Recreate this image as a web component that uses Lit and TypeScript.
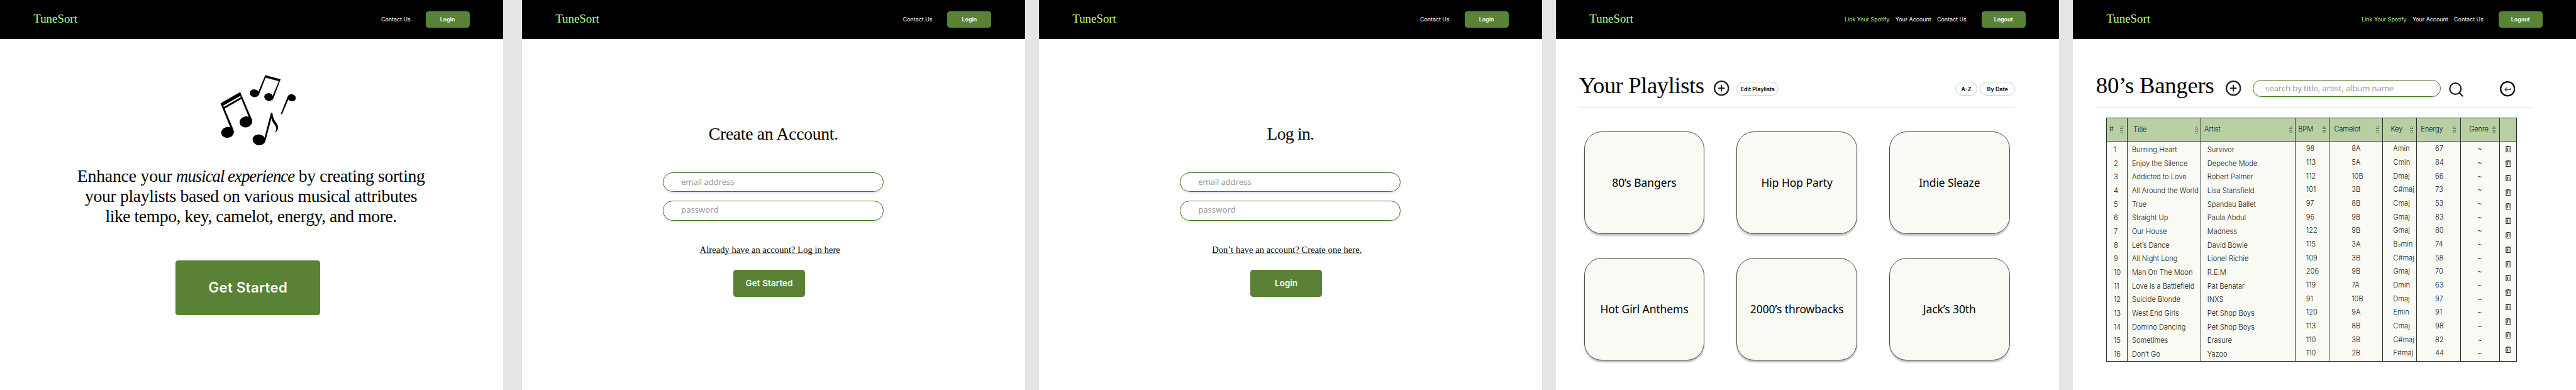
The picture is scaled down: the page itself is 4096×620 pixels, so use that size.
import { LitElement, html, css, nothing } from "lit";
import { customElement, property } from "lit/decorators.js";
import { classMap } from "lit/directives/class-map.js";

const plusIcon = html`<svg viewBox="0 0 44 44" width="44" height="44" fill="none" stroke="#1f1f1f" stroke-width="4">
  <circle cx="22" cy="22" r="20" />
  <path d="M14 22H30M22 14V30" stroke-linecap="round" stroke-width="3.6" />
</svg>`;

const searchIcon = html`<svg viewBox="0 0 48 48" width="48" height="48" fill="none" stroke="#1f1f1f" stroke-width="4">
  <circle cx="22" cy="21.7" r="16" />
  <path d="M33.4 33.4L42.3 42.3" stroke-linecap="round" />
</svg>`;

const returnIcon = html`<svg viewBox="0 0 44 44" width="44" height="44" fill="none">
  <circle cx="22" cy="22" r="20" stroke="#000" stroke-width="4" />
  <path d="M30.3 19.3V24H14.4M19.5 18.8L14.3 24L19.5 29.2" stroke="#1c1c1c" stroke-width="1.9" />
</svg>`;

const sortIcon = html`<svg viewBox="0 0 9.4 22" width="9.4" height="22">
  <path d="M4.7 1L8.7 7.8H.7Z M4.7 21L8.7 14.2H.7Z" fill="#fff" stroke="#1a2214" stroke-width="1.2" />
</svg>`;

const trashIcon = html`<svg viewBox="0 0 16 18" width="16" height="18" fill="none" stroke="#1c1b1f" stroke-width="2">
  <path d="M0 2.1H16M5 1H11M1.7 2V17H14.3V2M5.9 5V14M10.1 5V14" />
</svg>`;

const notesArt = html`<svg class="notes" viewBox="60 30 720 690" width="240" height="230">
  <path d="M96 318L265 221L354 430Q368 450 368 475L340 440L275 280L131 364L197 520Q210 545 210 570L180 526Z" />
  <path d="M119 338L265 254L270 265L124 349Z" fill="#fff" />
  <ellipse cx="156" cy="567" rx="55" ry="46.5" transform="rotate(-12 156 567)" />
  <ellipse cx="314" cy="477" rx="55" ry="46.5" transform="rotate(-12 314 477)" />
  <ellipse cx="386" cy="231" rx="39" ry="33" transform="rotate(12 386 231)" />
  <ellipse cx="510" cy="264" rx="39" ry="33" transform="rotate(12 510 264)" />
  <path d="M480 76L612 111L552 270Q547 288 535 294L540 262L596 127L483 98L429 235Q424 250 412 260L418 224Z" />
  <ellipse cx="707" cy="270" rx="36" ry="30" transform="rotate(14 707 270)" />
  <path d="M671 262L684 272L624 412L613 409Z" />
  <ellipse cx="426" cy="631" rx="55" ry="46" transform="rotate(8 426 631)" />
  <path d="M529 399L542 401C545 470 590 485 590 525C590 545 578 564 558 566C574 555 577 540 573 525C566 500 540 485 533 446L483 636Q478 655 462 668L474 612Z" />
</svg>`;

@customElement("site-header")
class SiteHeader extends LitElement {
  @property({ type: Boolean }) member = false;

  static styles = css`
    :host {
      display: flex;
      align-items: center;
      justify-content: space-between;
      box-sizing: border-box;
      height: 112px;
      padding: 0 96px;
      background: #000;
      color: #fff;
      font: 16px/24px Inter, sans-serif;
      white-space: nowrap;
    }
    .logo {
      font: 34px/40px "Liberation Serif", serif;
      color: #b6ff80;
      padding-bottom: 3px;
    }
    nav {
      display: flex;
      align-items: center;
      gap: 17px;
    }
    .spotify {
      color: #b6ff80;
    }
    .session {
      display: grid;
      place-items: center;
      width: 126px;
      height: 48px;
      margin-left: 26px;
      border-radius: 8px;
      background: #598237;
      font-weight: 600;
    }
  `;

  render() {
    return html`
      <span class="logo">TuneSort</span>
      <nav>
        ${this.member
          ? html`<span class="spotify">Link Your Spotify</span><span>Your Account</span>`
          : nothing}
        <span>Contact Us</span>
        <span class="session">${this.member ? "Logout" : "Login"}</span>
      </nav>
    `;
  }
}

@customElement("landing-screen")
class LandingScreen extends LitElement {
  static styles = css`
    :host {
      display: block;
      background: #fff;
    }
    .notes {
      display: block;
      margin: 88px 0 0 620px;
    }
    .pitch {
      margin: 46px 0 0;
      padding-right: 3px;
      text-align: center;
      font: 50px/57.6px "Liberation Serif", serif;
      letter-spacing: -0.7px;
      white-space: nowrap;
    }
    .lead {
      letter-spacing: -0.4px;
    }
    .pitch em {
      font-size: 48px;
      letter-spacing: -1.7px;
    }
    .last {
      letter-spacing: -0.86px;
    }
    .start {
      display: grid;
      place-items: center;
      width: 414px;
      height: 158px;
      margin: 96px 0 0 503px;
      border-radius: 8px;
      background: #598237;
      color: #fff;
      font: 600 40px/48px Inter, sans-serif;
      letter-spacing: 0.55px;
    }
  `;

  render() {
    return html`
      <site-header></site-header>
      ${notesArt}
      <p class="pitch">
        <span class="lead">Enhance your</span> <em>musical experience</em> by creating sorting<br />
        your playlists based on various musical attributes<br />
        <span class="last">like tempo, key, camelot, energy, and more.</span>
      </p>
      <div class="start">Get Started</div>
    `;
  }
}

@customElement("auth-screen")
class AuthScreen extends LitElement {
  @property() heading = "";
  @property() hint = "";
  @property() action = "";
  @property({ type: Boolean }) tight = false;

  static styles = css`
    :host {
      display: block;
      background: #fff;
    }
    h1 {
      margin: 241px 0 80px;
      text-align: center;
      font: 50px/60px "Liberation Serif", serif;
      letter-spacing: -0.6px;
    }
    h1.tight {
      letter-spacing: -1.4px;
    }
    .field {
      display: flex;
      align-items: center;
      box-sizing: border-box;
      width: 633px;
      height: 57px;
      margin: 0 0 25px 403px;
      padding-left: 51px;
      border: 2px solid #447022;
      border-radius: 28px;
      box-shadow: 0 4px 4px rgba(0, 0, 0, 0.1);
      color: #949494;
      font: 24px/32px "Open Sans", sans-serif;
      letter-spacing: -0.35px;
    }
    .secret {
      padding-bottom: 6px;
      letter-spacing: -0.1px;
    }
    .hint {
      margin-top: 69px;
      padding-right: 20px;
      text-align: center;
      font: 26px/30px "Liberation Serif", serif;
      letter-spacing: 0.18px;
      text-decoration: underline;
      text-decoration-color: #8a8a8a;
      text-decoration-thickness: 1px;
      text-underline-offset: 2px;
      text-decoration-skip-ink: none;
    }
    .submit {
      display: grid;
      place-items: center;
      width: 206px;
      height: 78px;
      margin: 41px 0 0 605px;
      border-radius: 8px;
      background: #598237;
      color: #fff;
      font: 600 24px/30px Inter, sans-serif;
      letter-spacing: 0.28px;
    }
  `;

  render() {
    return html`
      <site-header></site-header>
      <h1 class=${classMap({ tight: this.tight })}>${this.heading}</h1>
      <div class="field">email address</div>
      <div class="field secret">password</div>
      <div class="hint">${this.hint}</div>
      <div class="submit">${this.action}</div>
    `;
  }
}

const titleBar = css`
  .bar {
    display: flex;
    align-items: flex-start;
    box-sizing: border-box;
    height: 195px;
    width: 1248.5px;
    margin-left: 66px;
    padding-top: 101px;
    border-bottom: 2px solid #e5e5e5;
  }
  .bar h1 {
    flex: none;
    margin: 0;
    font: 66px/66px "Liberation Serif", serif;
    white-space: nowrap;
  }
  .bar svg {
    display: block;
    flex: none;
  }
`;

@customElement("playlists-screen")
class PlaylistsScreen extends LitElement {
  static styles = [
    titleBar,
    css`
      :host {
        display: block;
        background: #fff;
      }
      .bar h1 {
        width: 386px;
        letter-spacing: -0.8px;
      }
      .add {
        margin-top: 18px;
      }
      .pill {
        box-sizing: border-box;
        height: 40px;
        margin-top: 21px;
        border: 1px solid #cfcfcf;
        border-radius: 20px;
        font: 600 16px/38px Inter, sans-serif;
        text-align: center;
        white-space: nowrap;
      }
      .edit {
        width: 121px;
        margin-left: 21px;
      }
      .alpha {
        width: 62px;
        margin-left: auto;
      }
      .date {
        width: 101px;
        margin-left: 8px;
      }
      .cards {
        display: grid;
        grid-template-columns: repeat(3, 345px);
        grid-auto-rows: 292px;
        gap: 70px 91.8px;
        margin: 70px 0 0 80.5px;
      }
      .card {
        display: grid;
        place-items: center;
        box-sizing: border-box;
        padding-bottom: 2px;
        border: 1px solid #4a4a4a;
        border-radius: 50px;
        background: #f9faf4;
        box-shadow: 0 4px 4px rgba(0, 0, 0, 0.25);
        font: 31.5px/40px "Noto Sans", sans-serif;
        letter-spacing: -0.15px;
      }
    `,
  ];

  render() {
    const names = ["80’s Bangers", "Hip Hop Party", "Indie Sleaze", "Hot Girl Anthems", "2000’s throwbacks", "Jack’s 30th"];
    return html`
      <site-header member></site-header>
      <div class="bar">
        <h1>Your Playlists</h1>
        <span class="add">${plusIcon}</span>
        <span class="pill edit">Edit Playlists</span>
        <span class="pill alpha">A-Z</span>
        <span class="pill date">By Date</span>
      </div>
      <div class="cards">${names.map((n) => html`<div class="card">${n}</div>`)}</div>
    `;
  }
}

type Track = [title: string, artist: string, bpm: number, camelot: string, key: string, energy: number];

const tracks: Track[] = [
  ["Burning Heart", "Survivor", 98, "8A", "Amin", 67],
  ["Enjoy the Silence", "Depeche Mode", 113, "5A", "Cmin", 84],
  ["Addicted to Love", "Robert Palmer", 112, "10B", "Dmaj", 66],
  ["All Around the World", "Lisa Stansfield", 101, "3B", "C#maj", 73],
  ["True", "Spandau Ballet", 97, "8B", "Cmaj", 53],
  ["Straight Up", "Paula Abdul", 96, "9B", "Gmaj", 83],
  ["Our House", "Madness", 122, "9B", "Gmaj", 80],
  ["Let’s Dance", "David Bowie", 115, "3A", "B♭min", 74],
  ["All Night Long", "Lionel Richie", 109, "3B", "C#maj", 58],
  ["Man On The Moon", "R.E.M", 206, "9B", "Gmaj", 70],
  ["Love is a Battlefield", "Pat Benatar", 119, "7A", "Dmin", 63],
  ["Suicide Blonde", "INXS", 91, "10B", "Dmaj", 97],
  ["West End Girls", "Pet Shop Boys", 120, "9A", "Emin", 91],
  ["Domino Dancing", "Pet Shop Boys", 113, "8B", "Cmaj", 98],
  ["Sometimes", "Erasure", 110, "3B", "C#maj", 82],
  ["Don’t Go", "Yazoo", 110, "2B", "F#maj", 44],
];

const columns: { id: string; label: string; cells: (string | number)[] }[] = [
  { id: "num", label: "#", cells: tracks.map((_, i) => i + 1) },
  { id: "title", label: "Title", cells: tracks.map((t) => t[0]) },
  { id: "artist", label: "Artist", cells: tracks.map((t) => t[1]) },
  { id: "bpm", label: "BPM", cells: tracks.map((t) => t[2]) },
  { id: "camelot", label: "Camelot", cells: tracks.map((t) => t[3]) },
  { id: "key", label: "Key", cells: tracks.map((t) => t[4]) },
  { id: "energy", label: "Energy", cells: tracks.map((t) => t[5]) },
  { id: "genre", label: "Genre", cells: tracks.map(() => "~") },
];

@customElement("tracks-screen")
class TracksScreen extends LitElement {
  static styles = [
    titleBar,
    css`
      :host {
        display: block;
        background: #fff;
      }
      .bar h1 {
        width: 372px;
        letter-spacing: -0.4px;
      }
      .add {
        margin-top: 18px;
      }
      .search {
        box-sizing: border-box;
        width: 538px;
        height: 49px;
        margin: 15px 0 0 33px;
        padding-left: 34px;
        border: 2px solid #447022;
        border-radius: 25px;
        box-shadow: 0 4px 4px rgba(0, 0, 0, 0.1);
        color: #949494;
        font: 24px/46px "Open Sans", sans-serif;
        letter-spacing: -0.36px;
        white-space: nowrap;
      }
      .find {
        margin: 20px 0 0 20px;
      }
      .back {
        margin: 20px 0 0 101px;
      }
      .table {
        display: grid;
        grid-template-columns: 59px 211px 270px 96px 154px 96px 127px 111px 49.5px;
        box-sizing: border-box;
        width: 1174px;
        height: 698px;
        margin: 30px 0 0 96px;
        border: solid #2a2a2a;
        border-width: 1px 0 1px 1px;
        background: #f9faf4;
        color: #111;
        font: 300 20px/39px Inter, sans-serif;
        white-space: nowrap;
      }
      .col {
        box-sizing: border-box;
        border-right: 1px solid #2a2a2a;
      }
      .head {
        display: flex;
        align-items: center;
        justify-content: space-between;
        box-sizing: border-box;
        height: 67px;
        border-bottom: 1px solid #2a2a2a;
        background: #b8cfa3;
        letter-spacing: -0.25px;
      }
      .cells {
        padding-top: 2px;
      }
      .num .head { padding: 0 11px 0 6px; }
      .num .cells { padding: 5px 0 0 19px; }
      .title .head { padding: 2px 8px 0 16px; }
      .title .cells { padding: 5px 0 0 12px; }
      .artist .head { padding: 0 8px 0 8px; }
      .artist .cells { padding: 5px 0 0 17px; }
      .bpm .head { padding: 0 9px 0 7px; }
      .bpm .cells { padding-left: 29.5px; }
      .camelot .head { padding: 0 9.5px 0 14px; }
      .camelot .cells { padding-left: 64px; }
      .key .head { padding: 0 7.5px 0 22px; }
      .key .cells { padding-left: 29px; }
      .energy .head { padding: 0 13px 0 12px; }
      .energy .cells { padding-left: 53px; }
      .genre .head { padding: 0 10px 0 23.5px; }
      .genre .cells { padding-left: 47px; }
      .trash {
        display: grid;
        grid-auto-rows: 41.03px;
        place-items: center;
        padding-top: 1px;
      }
    `,
  ];

  render() {
    return html`
      <site-header member></site-header>
      <div class="bar">
        <h1>80’s Bangers</h1>
        <span class="add">${plusIcon}</span>
        <span class="search">search by title, artist, album name</span>
        <span class="find">${searchIcon}</span>
        <span class="back">${returnIcon}</span>
      </div>
      <div class="table">
        ${columns.map(
          (c) => html`<div class="col ${c.id}">
            <div class="head"><span>${c.label}</span>${sortIcon}</div>
            <div class="cells">${c.cells.map((v) => html`<div>${v}</div>`)}</div>
          </div>`
        )}
        <div class="col">
          <div class="head"></div>
          <div class="trash">${Array.from({ length: 15 }, () => trashIcon)}</div>
        </div>
      </div>
    `;
  }
}

@customElement("app-root")
class AppRoot extends LitElement {
  static styles = css`
    :host {
      display: block;
      width: 4096px;
      height: 620px;
      overflow: hidden;
      background: #e5e5e5;
    }
    .board {
      display: grid;
      grid-template-columns: 1454px 1440px 1440px 1440px 1440px;
      column-gap: 40px;
      width: 7374px;
      height: 1117px;
      zoom: 0.55547;
      color: #000;
    }
    .first {
      width: 1440px;
    }
  `;

  render() {
    return html`
      <div class="board">
        <landing-screen class="first"></landing-screen>
        <auth-screen heading="Create an Account." hint="Already have an account? Log in here" action="Get Started"></auth-screen>
        <auth-screen heading="Log in." hint="Don’t have an account? Create one here." action="Login" tight></auth-screen>
        <playlists-screen></playlists-screen>
        <tracks-screen></tracks-screen>
      </div>
    `;
  }
}
